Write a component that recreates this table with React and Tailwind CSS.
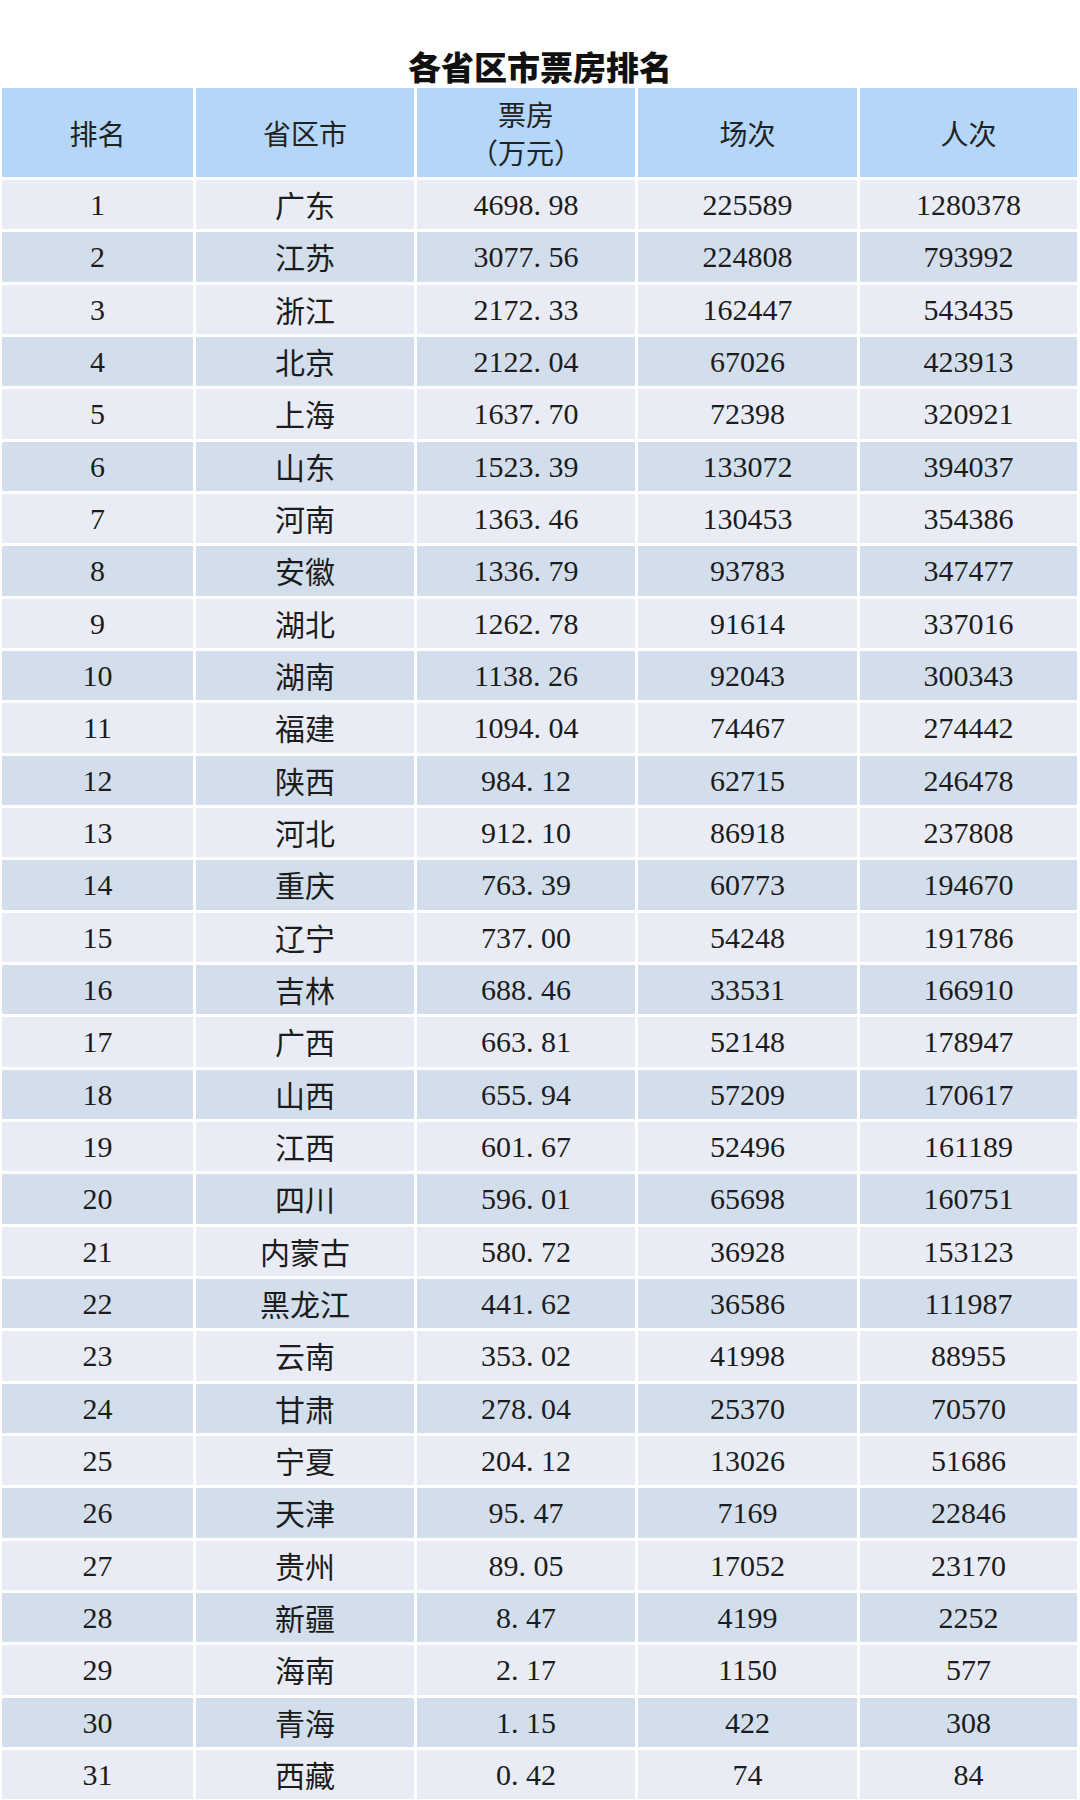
const ROWS = [
  ["广东", "4698.98", "225589", "1280378"],
  ["江苏", "3077.56", "224808", "793992"],
  ["浙江", "2172.33", "162447", "543435"],
  ["北京", "2122.04", "67026", "423913"],
  ["上海", "1637.70", "72398", "320921"],
  ["山东", "1523.39", "133072", "394037"],
  ["河南", "1363.46", "130453", "354386"],
  ["安徽", "1336.79", "93783", "347477"],
  ["湖北", "1262.78", "91614", "337016"],
  ["湖南", "1138.26", "92043", "300343"],
  ["福建", "1094.04", "74467", "274442"],
  ["陕西", "984.12", "62715", "246478"],
  ["河北", "912.10", "86918", "237808"],
  ["重庆", "763.39", "60773", "194670"],
  ["辽宁", "737.00", "54248", "191786"],
  ["吉林", "688.46", "33531", "166910"],
  ["广西", "663.81", "52148", "178947"],
  ["山西", "655.94", "57209", "170617"],
  ["江西", "601.67", "52496", "161189"],
  ["四川", "596.01", "65698", "160751"],
  ["内蒙古", "580.72", "36928", "153123"],
  ["黑龙江", "441.62", "36586", "111987"],
  ["云南", "353.02", "41998", "88955"],
  ["甘肃", "278.04", "25370", "70570"],
  ["宁夏", "204.12", "13026", "51686"],
  ["天津", "95.47", "7169", "22846"],
  ["贵州", "89.05", "17052", "23170"],
  ["新疆", "8.47", "4199", "2252"],
  ["海南", "2.17", "1150", "577"],
  ["青海", "1.15", "422", "308"],
  ["西藏", "0.42", "74", "84"],
];

const CJK = "font-['Noto_Sans_CJK_SC',sans-serif]";
const NUM = "font-['Liberation_Serif','Noto_Sans_CJK_SC',serif]";

// SimSun-style half-width dot: give the period a full digit cell
function Money({ value }) {
  const [a, b] = value.split(".");
  return (
    <span>
      {a}.<span className="ml-[0.25em]">{b}</span>
    </span>
  );
}

function Cell({ bg, className = "", children }) {
  return (
    <div className={`flex h-[49.33px] items-center justify-center text-[30px] text-[#1c1c1c] ${bg} ${className}`}>
      {children}
    </div>
  );
}

function Head({ children }) {
  return (
    <div className={`flex h-[89px] flex-col items-center justify-center bg-[#b4d6f8] text-[28px] leading-[38px] text-[#222] ${CJK}`}>
      {children}
    </div>
  );
}

export default function App() {
  return (
    <div className="h-[1800px] w-[1080px] overflow-hidden bg-white">
      <div className="h-[88px] pt-[46px]">
        <h1 className={`text-center text-[33px] font-black leading-[40px] text-[#111] ${CJK}`}>
          各省区市票房排名
        </h1>
      </div>
      <div className="ml-[2px] grid w-[1075px] grid-cols-[191px_218px_218px_219px_217px] gap-[3px]">
        <Head>排名</Head>
        <Head>省区市</Head>
        <Head>
          <span className="block h-[38px]">票房</span>
          <span className="block h-[38px]">（万元）</span>
        </Head>
        <Head>场次</Head>
        <Head>人次</Head>
        {ROWS.map((r, i) => {
          const bg = i % 2 === 0 ? "bg-[#e9ecf5]" : "bg-[#d3deed]";
          return [
            <Cell key={`${i}-a`} bg={bg} className={NUM}>{i + 1}</Cell>,
            <Cell key={`${i}-b`} bg={bg} className={CJK}>{r[0]}</Cell>,
            <Cell key={`${i}-c`} bg={bg} className={NUM}><Money value={r[1]} /></Cell>,
            <Cell key={`${i}-d`} bg={bg} className={NUM}>{r[2]}</Cell>,
            <Cell key={`${i}-e`} bg={bg} className={NUM}>{r[3]}</Cell>,
          ];
        })}
      </div>
    </div>
  );
}
